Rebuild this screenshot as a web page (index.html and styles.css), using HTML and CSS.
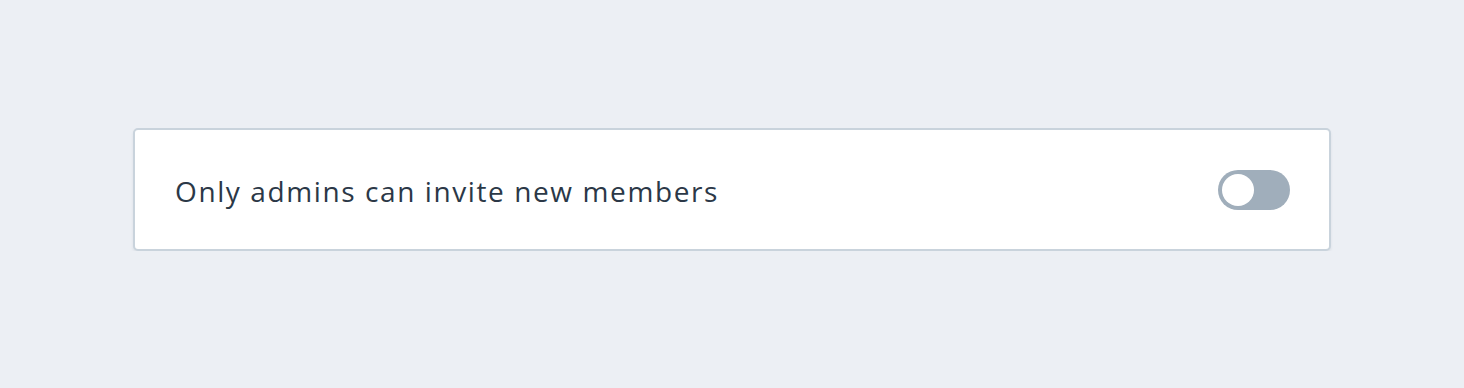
FILE: index.html
```html
<!DOCTYPE html>
<html>
<head>
<meta charset="utf-8">
<link rel="stylesheet" href="styles.css">
</head>
<body>
<div class="page">
  <div class="card">
    <span class="label">Only admins can invite new members</span>
    <button class="toggle" type="button" aria-pressed="false"><span class="knob"></span></button>
  </div>
</div>
</body>
</html>
```
FILE: styles.css
```css
html, body {
  margin: 0;
  padding: 0;
  background: #eceff4;
}
.page {
  padding: 128px 133px 0;
}
.card {
  box-sizing: border-box;
  height: 123px;
  background: #ffffff;
  border: 2px solid #c9d3dc;
  border-radius: 5px;
  box-shadow: 0 2px 3px rgba(40, 60, 80, 0.08);
  display: flex;
  align-items: center;
  justify-content: space-between;
  padding: 0 39px 0 40px;
}
.label {
  font-family: "Open Sans", sans-serif;
  font-size: 28px;
  color: #2b3847;
  letter-spacing: 1.6px;
  margin-top: 2px;
}
.toggle {
  box-sizing: border-box;
  width: 72px;
  height: 40px;
  border: none;
  border-radius: 20px;
  background: #a0aebb;
  padding: 4px;
  display: flex;
  align-items: center;
  margin-top: 1px;
}
.knob {
  width: 32px;
  height: 32px;
  border-radius: 50%;
  background: #ffffff;
}
```
